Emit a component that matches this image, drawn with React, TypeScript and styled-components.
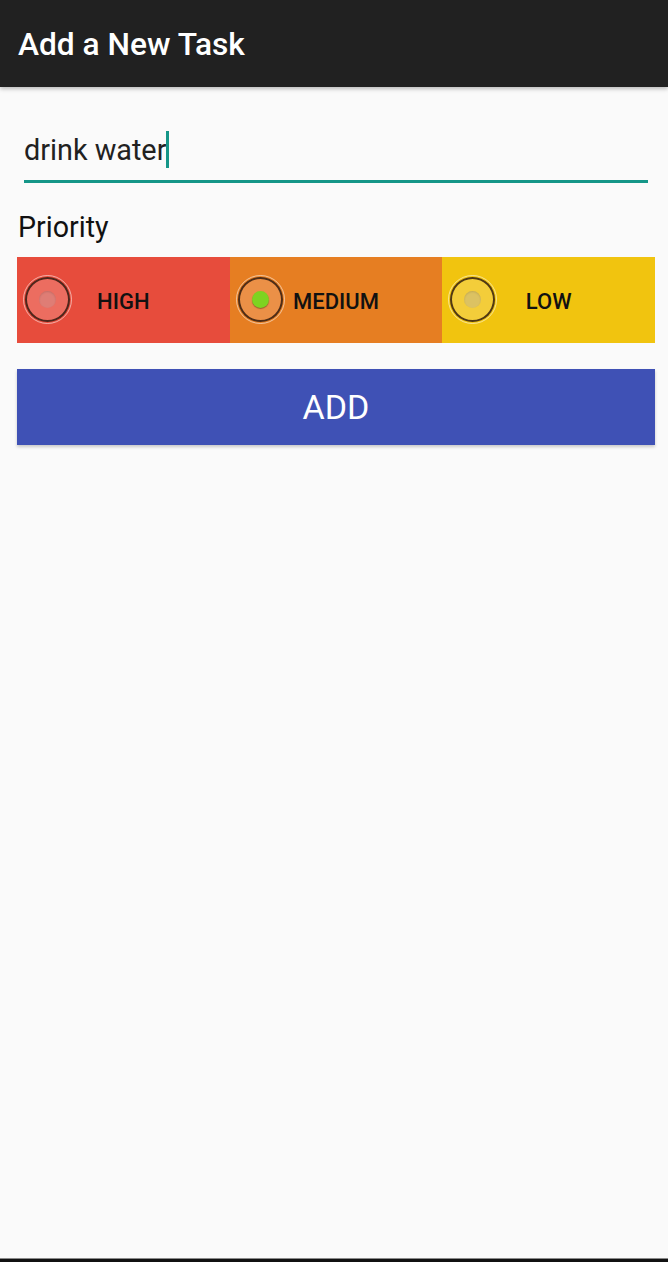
import React, { useState } from "react";
import styled, { createGlobalStyle } from "styled-components";

const GlobalStyle = createGlobalStyle`
  html, body {
    margin: 0;
    padding: 0;
    background: #fafafa;
    font-family: Roboto, "Noto Sans", sans-serif;
  }
  * {
    box-sizing: border-box;
  }
`;

const Screen = styled.div`
  min-height: 100vh;
  display: flex;
  flex-direction: column;
  background: #fafafa;
`;

const AppBar = styled.header`
  height: 87px;
  background: #212121;
  display: flex;
  align-items: center;
  padding: 2px 18px 0;
  box-shadow: 0 2px 4px rgba(0, 0, 0, 0.25);
`;

const Title = styled.h1`
  margin: 0;
  color: #ffffff;
  font-size: 31.7px;
  font-weight: 500;
`;

const Content = styled.main`
  flex: 1;
  padding: 28px 13px 0 17px;
`;

const InputWrap = styled.div`
  margin: 0 7px 0 7px;
  border-bottom: 3px solid #159688;
  height: 68px;
  display: flex;
  align-items: center;
  padding-top: 6px;
`;

const TaskText = styled.span`
  font-size: 28.8px;
  color: #212121;
  line-height: 1;
`;

const Caret = styled.span`
  display: inline-block;
  width: 3px;
  height: 37px;
  background: #159688;
  position: relative;
  top: -1px;
`;

const Label = styled.div`
  margin: 30px 0 0 1px;
  font-size: 28.6px;
  color: #111111;
  line-height: 1;
`;

const PriorityRow = styled.div`
  margin-top: 15px;
  display: grid;
  grid-template-columns: repeat(3, 1fr);
  height: 86px;
`;

const PriorityCell = styled.label<{ $bg: string }>`
  background: ${(p) => p.$bg};
  display: grid;
  grid-template-areas: "stack";
  align-items: center;
  cursor: pointer;
`;

const Radio = styled.span`
  grid-area: stack;
  justify-self: start;
  margin-left: 6px;
  width: 49px;
  height: 49px;
  border-radius: 50%;
  border: 1.5px solid rgba(255, 255, 255, 0.55);
  display: flex;
  align-items: center;
  justify-content: center;
`;

const RadioRing = styled.span<{ $fill: string }>`
  width: 45px;
  height: 45px;
  border-radius: 50%;
  border: 2.5px solid rgba(40, 20, 10, 0.8);
  background: ${(p) => p.$fill};
  display: flex;
  align-items: center;
  justify-content: center;
`;

const Dot = styled.span<{ $color: string; $checked: boolean }>`
  width: 17px;
  height: 17px;
  border-radius: 50%;
  background: ${(p) => p.$color};
  box-shadow: ${(p) =>
    p.$checked
      ? "0 1px 1px rgba(0,0,0,0.35)"
      : "inset 0 1px 2px rgba(0,0,0,0.12)"};
`;

const PriorityText = styled.span`
  grid-area: stack;
  justify-self: center;
  font-size: 22px;
  font-weight: 500;
  color: #111111;
  padding-top: 3px;
`;

const AddButton = styled.button`
  margin-top: 26px;
  width: 100%;
  height: 76px;
  border: none;
  background: #3f51b5;
  color: #ffffff;
  font-family: Roboto, "Noto Sans", sans-serif;
  font-size: 34px;
  padding-top: 2px;
  box-shadow: 0 2px 3px rgba(0, 0, 0, 0.2);
  cursor: pointer;
`;

const NavEdge = styled.div`
  height: 4px;
  background: #111111;
  border-top: 1px solid #8a8a8a;
`;

type Priority = {
  key: string;
  label: string;
  bg: string;
  fill: string;
  dot: string;
};

const priorities: Priority[] = [
  { key: "high", label: "HIGH", bg: "#e74c3c", fill: "#ec6d60", dot: "#df7d75" },
  { key: "medium", label: "MEDIUM", bg: "#e67e22", fill: "#eb9047", dot: "#d48e4c" },
  { key: "low", label: "LOW", bg: "#f1c40f", fill: "#f3cd3a", dot: "#dcc262" },
];

const App: React.FC = () => {
  const [selected, setSelected] = useState("medium");

  return (
    <>
      <GlobalStyle />
      <Screen>
        <AppBar>
          <Title>Add a New Task</Title>
        </AppBar>
        <Content>
          <InputWrap>
            <TaskText>drink water</TaskText>
            <Caret />
          </InputWrap>
          <Label>Priority</Label>
          <PriorityRow>
            {priorities.map((p) => {
              const checked = selected === p.key;
              return (
                <PriorityCell key={p.key} $bg={p.bg} onClick={() => setSelected(p.key)}>
                  <Radio>
                    <RadioRing $fill={p.fill}>
                      <Dot $color={checked ? "#7ed321" : p.dot} $checked={checked} />
                    </RadioRing>
                  </Radio>
                  <PriorityText>{p.label}</PriorityText>
                </PriorityCell>
              );
            })}
          </PriorityRow>
          <AddButton>ADD</AddButton>
        </Content>
        <NavEdge />
      </Screen>
    </>
  );
};

export default App;
